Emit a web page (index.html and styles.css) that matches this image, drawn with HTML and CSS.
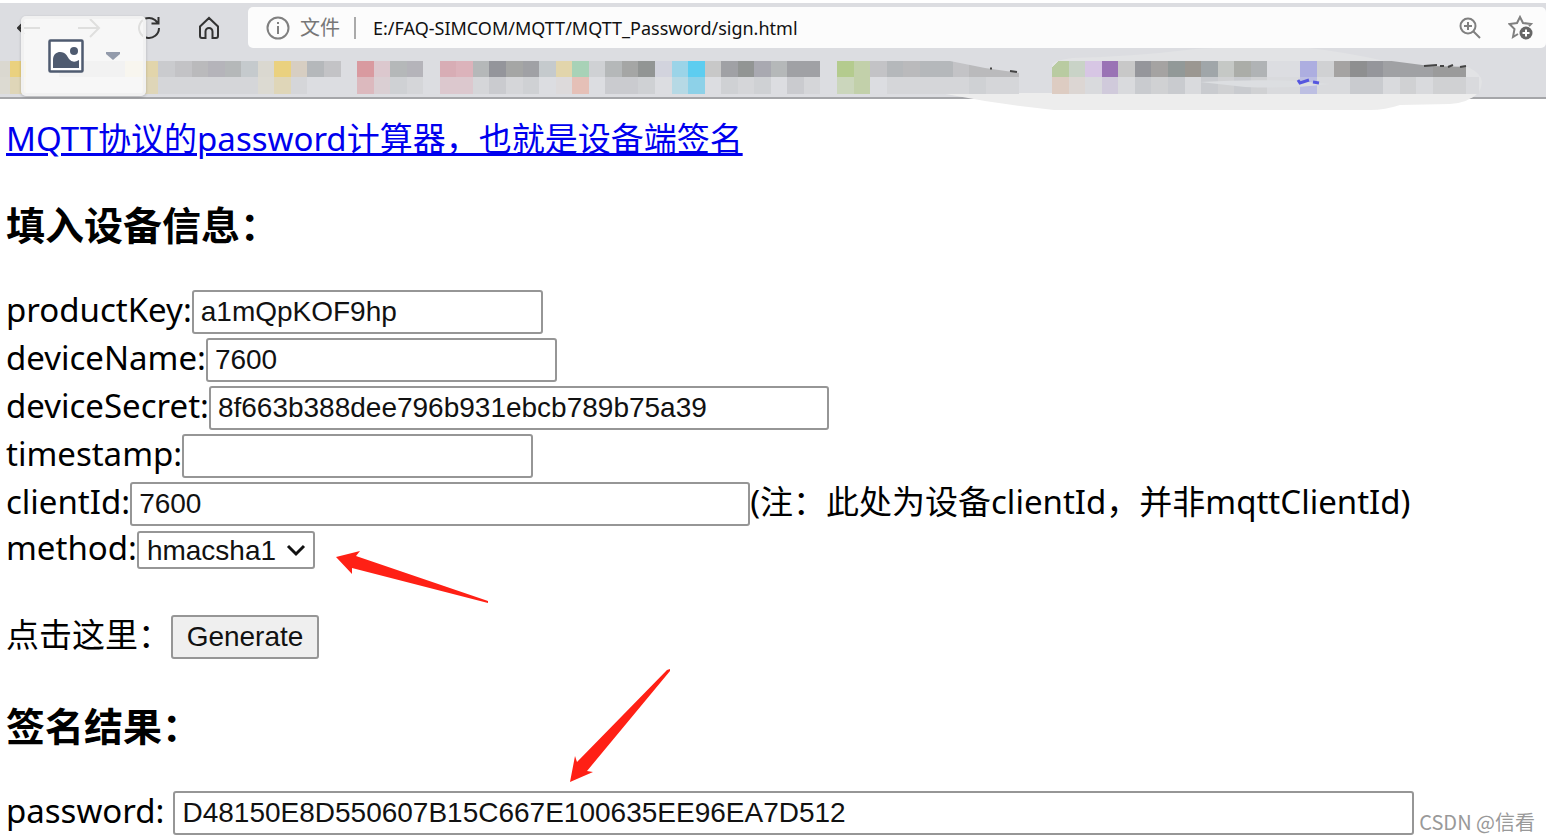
FILE: index.html
```
<!DOCTYPE html>
<html lang="zh-CN">
<head>
    <meta charset="UTF-8">
    <meta name="viewport" content="width=device-width, initial-scale=1.0">
    <title>MQTT_Password</title>
    <link rel="stylesheet" href="styles.css">
</head>
<body>
    <header class="browser">
        <div class="toolbar">
            <nav class="nav-btns">
                <button class="nav-btn" aria-label="后退">
                    <svg width="24" height="24" viewBox="0 0 24 24"><path d="M23 12H1M7 6l-6 6 6 6"/></svg>
                </button>
                <button class="nav-btn" aria-label="前进">
                    <svg width="24" height="24" viewBox="0 0 24 24"><path d="M1 12h21M13 3l9 9-9 9"/></svg>
                </button>
                <button class="nav-btn" aria-label="刷新">
                    <svg width="24" height="24" viewBox="0 0 24 24"><path d="M22 12A10 10 0 1 1 18 4l3 3M21.500 1v6.500h-7"/></svg>
                </button>
                <button class="nav-btn" aria-label="主页">
                    <svg width="24" height="24" viewBox="0 0 24 24"><path d="M3 10.500L12 2l9 8.500V20q0 2-2 2h-3.500v-6.500a3.500 3.500 0 0 0-7 0V22H5q-2 0-2-2z"/></svg>
                </button>
            </nav>
            <div class="address">
                <svg class="gray-icon" width="24" height="24" viewBox="0 0 24 24"><circle cx="12" cy="12" r="10.500"/><path d="M12 10v8M12 6v2"/></svg>
                <label class="scheme" for="url">文件</label>
                <input class="url" id="url" type="text" value="E:/FAQ-SIMCOM/MQTT/MQTT_Password/sign.html">
                <button class="address-btn" aria-label="缩放">
                    <svg class="gray-icon" width="24" height="24" viewBox="0 0 24 24"><circle cx="10" cy="10" r="7.500"/><path d="M15.500 15.500L22 22M10 6v8M6 10h8"/></svg>
                </button>
                <button class="address-btn" aria-label="收藏">
                    <svg class="gray-icon" width="26" height="26" viewBox="0 0 26 26"><path d="M10 19l-5 3 1.500-8L1.500 9l7.500-1L12 2l3 6 8 1-2 2"/><circle class="solid" cx="18" cy="18" r="6.500"/><path class="plus" d="M18 14.500v7M14.500 18h7"/></svg>
                </button>
            </div>
        </div>
        <div class="bookmarks">
            <svg class="mosaic" width="1546" height="66" viewBox="0 48 1546 66">
                <path fill="#e2e3e5" d="M1052 64Q1056 60 1072 58Q1130 57 1195 49Q1240 46 1300 47Q1340 51 1385 61L1468 67Q1482 74 1482 82Q1481 94 1471 98L1052 96z"/>
                <path fill="#ededed" d="M940 93H1478Q1468 103 1450 104L1400 105Q1385 110 1370 110H1054L1020 106 985 101z"/>
                <g transform="translate(9.5 61) scale(16.55 16.3)" shape-rendering="crispEdges">
                    <path fill="#dad8d0" d="M-1 0h1v1h-1zM15 0h1v1h-1z"/>
                    <path fill="#ead17f" d="M0 0h1v1h-1zM16 0h1v1h-1z"/>
                    <path fill="#dfd6b8" d="M0 1h1v1h-1zM8 1h1v1h-1zM16 1h1v1h-1z"/>
                    <path fill="#b5b8bb" d="M3 0h4v1h-4zM18 0h1v1h-1zM53 0h1v1h-1zM55 0h2v1h-2z"/>
                    <path fill="#e2d5ab" d="M7 0h2v1h-2zM33 0h1v1h-1z"/>
                    <path fill="#cacbce" d="M9 0h1v1h-1z"/>
                    <path fill="#c3c3c6" d="M10 0h1v1h-1zM19 0h1v1h-1zM52 0h1v1h-1zM57 0h1v1h-1z"/>
                    <path fill="#bababc" d="M11 0h1v1h-1zM54 0h1v1h-1zM58 0h3v1h-3z"/>
                    <path fill="#b5b4ba" d="M12 0h1v1h-1zM24 0h1v1h-1z"/>
                    <path fill="#b5b8b9" d="M13 0h1v1h-1zM23 0h1v1h-1zM28 0h1v1h-1zM36 0h1v1h-1zM46 0h1v1h-1z"/>
                    <path fill="#c5cacd" d="M14 0h1v1h-1zM32 0h1v1h-1z"/>
                    <path fill="#d7cec2" d="M17 0h1v1h-1z"/>
                    <path fill="#d5d6d9" d="M9 1h6v1h-6zM17 1h1v1h-1zM24 1h1v1h-1zM28 1h1v1h-1zM30 1h1v1h-1zM44 1h1v1h-1zM48 1h1v1h-1zM53 1h5v1h-5zM59 1h2v1h-2z"/>
                    <path fill="#dcdad2" d="M-1 1h1v1h-1zM15 1h1v1h-1z"/>
                    <path fill="#d99aa0" d="M21 0h1v1h-1z"/>
                    <path fill="#dcb9be" d="M21 1h1v1h-1z"/>
                    <path fill="#dcc8ce" d="M22 0h1v1h-1zM26 1h2v1h-2z"/>
                    <path fill="#dacfd3" d="M22 1h1v1h-1z"/>
                    <path fill="#cfd1d4" d="M23 1h1v1h-1zM31 1h1v1h-1zM35 0h1v1h-1zM38 1h1v1h-1zM43 1h1v1h-1zM45 1h1v1h-1zM58 1h1v1h-1z"/>
                    <path fill="#d8adb5" d="M26 0h1v1h-1z"/>
                    <path fill="#dcb3bb" d="M27 0h1v1h-1z"/>
                    <path fill="#94959b" d="M29 0h1v1h-1z"/>
                    <path fill="#cacbcf" d="M29 1h1v1h-1zM36 1h2v1h-2zM47 1h1v1h-1z"/>
                    <path fill="#a5a6a5" d="M30 0h1v1h-1zM37 0h1v1h-1z"/>
                    <path fill="#a0a1a5" d="M31 0h1v1h-1zM43 0h1v1h-1zM47 0h2v1h-2z"/>
                    <path fill="#dddadb" d="M33 1h1v1h-1z"/>
                    <path fill="#a8d2b7" d="M34 0h1v1h-1z"/>
                    <path fill="#e5c0b7" d="M34 1h1v1h-1z"/>
                    <path fill="#929594" d="M38 0h1v1h-1zM44 0h1v1h-1z"/>
                    <path fill="#d2d3dd" d="M39 0h1v1h-1z"/>
                    <path fill="#9bd4e8" d="M40 0h1v1h-1z"/>
                    <path fill="#b6d9e5" d="M40 1h1v1h-1z"/>
                    <path fill="#5dcdf0" d="M41 0h1v1h-1z"/>
                    <path fill="#8dd1e8" d="M41 1h1v1h-1z"/>
                    <path fill="#c8c8c8" d="M42 0h1v1h-1zM67 0h1v1h-1z"/>
                    <path fill="#a9a9b1" d="M45 0h1v1h-1z"/>
                    <path fill="#b4cb8e" d="M50 0h1v1h-1z"/>
                    <path fill="#cbd6bc" d="M50 1h1v1h-1z"/>
                    <path fill="#c2d0aa" d="M51 0h1v2h-1z"/>
                    <path fill="#b9cba1" d="M63.400 0h.6v1h-1v-.6z"/>
                    <path fill="#ddccc2" d="M63 1h1v1h-1z"/>
                    <path fill="#c9d3c7" d="M64 0h1v1h-1z"/>
                    <path fill="#dcd6d3" d="M64 1h1v1h-1z"/>
                    <path fill="#d7c6e4" d="M65 0h1v1h-1z"/>
                    <path fill="#9a73b5" d="M66 0h1v1h-1z"/>
                    <path fill="#d0cadb" d="M66 1h1v1h-1z"/>
                    <path fill="#d9dadd" d="M65 1h1v1h-1zM67 1h1v1h-1zM71 1h1v1h-1zM76 1h2v1h-2zM79 1h2v1h-2zM83 1h1v1h-1zM85 1h1v1h-1zM88 1h.8v1h-.8z"/>
                    <path fill="#95969b" d="M68 0h1v1h-1zM82 0h1v1h-1z"/>
                    <path fill="#c9cbcf" d="M68 1h1v1h-1zM70 1h1v1h-1zM72 1h1v1h-1zM74 1h1v1h-1zM81 1h2v1h-2z"/>
                    <path fill="#a5a3a2" d="M69 0h1v1h-1zM80 0h1v1h-1z"/>
                    <path fill="#d0d1d3" d="M69 1h1v1h-1zM73 1h1v1h-1zM75 1h1v1h-1zM79 0h1v1h-1zM84 1h1v1h-1zM86 1h2v1h-2z"/>
                    <path fill="#929998" d="M70 0h1v1h-1z"/>
                    <path fill="#9b9791" d="M71 0h1v1h-1z"/>
                    <path fill="#a0a6a9" d="M72 0h1v1h-1z"/>
                    <path fill="#c5c8c5" d="M73 0h1v1h-1z"/>
                    <path fill="#abada8" d="M74 0h1v1h-1z"/>
                    <path fill="#b0b3b5" d="M75 0h1v1h-1z"/>
                    <path fill="#dcdde1" d="M76 0h2v1h-2z"/>
                    <path fill="#adaee0" d="M78 0h1v1h-1z"/>
                    <path fill="#bdbfe2" d="M78 1h1v1h-1z"/>
                    <path fill="#8e8f90" d="M81 0h1v1h-1z"/>
                    <path fill="#a0a1a4" d="M83 0h3v1h-3z"/>
                    <path fill="#9b9b9b" d="M86 0h2v1h-2z"/>
                </g>
                <path fill="#dcdde1" d="M936 60L950 61 985 68 1020 73V60zM1384 60L1430 66 1470 67V60z"/>
                <path fill="#dcdee1" d="M1200 82Q1250 79 1296 81L1330 84Q1290 89 1245 87z"/>
                <path fill="none" stroke="#5556df" stroke-width="3" d="M1298 80l2 3 9-3M1313 82l6 1"/>
                <path fill="none" stroke="#444" stroke-width="2" d="M990 68.500h2M1010 71l7 1M1424 66l13-1M1440 66h4M1448 67l5-2M1460 67l6-1"/>
            </svg>
        </div>
        <div class="image-tool">
            <button class="image-btn" aria-label="图片">
                <svg width="36" height="34" viewBox="0 0 36 34"><rect x="1.500" y="1.500" width="33" height="31" rx="1" fill="#fff" stroke="#4f5b70" stroke-width="2.500"/><path fill="#4f5b70" d="M5 29V21C5 15 9 13 12 13C18 13 19 17 21 20Q25 25 31 21V29z"/><circle cx="26" cy="12" r="4" fill="#4f5b70"/></svg>
                <svg width="14" height="8" viewBox="0 0 14 8"><path fill="#939bab" d="M0 0h14v2L7 8 0 2z"/></svg>
            </button>
        </div>
    </header>

    <main class="page">
        <a class="title-link" href="#">MQTT协议的password计算器，也就是设备端签名</a>
        <h3>填入设备信息：</h3>
        <div class="row">
            <label for="productKey">productKey:</label><input type="text" id="productKey" class="field" value="a1mQpKOF9hp">
        </div>
        <div class="row">
            <label for="deviceName">deviceName:</label><input type="text" id="deviceName" class="field" value="7600">
        </div>
        <div class="row">
            <label for="deviceSecret">deviceSecret:</label><input type="text" id="deviceSecret" class="field field-wide" value="8f663b388dee796b931ebcb789b75a39">
        </div>
        <div class="row">
            <label for="timestamp">timestamp:</label><input type="text" id="timestamp" class="field">
        </div>
        <div class="row">
            <label for="clientId">clientId:</label><input type="text" id="clientId" class="field field-wide" value="7600"><span class="note">(注：此处为设备clientId，并非mqttClientId)</span>
        </div>
        <div class="row row-method">
            <label for="method">method:</label>
            <div class="select-wrap">
                <select id="method">
                    <option>hmacsha1</option>
                    <option>hmacmd5</option>
                </select>
                <svg class="chevron" width="20" height="14" viewBox="0 0 20 14"><path d="M2 2l8 8 8-8"/></svg>
                <svg class="arrow arrow-method" width="154" height="54" viewBox="0 0 154 54"><path d="M0 6L24 0 20 5 152 50V52L16 17 16 23z"/></svg>
            </div>
        </div>
        <div class="row row-generate">
            <label for="generate">点击这里：</label><button id="generate" class="generate-btn">Generate</button>
        </div>
        <h3>签名结果：</h3>
        <div class="row row-password">
            <label for="password">password:</label><input type="text" id="password" class="field field-result" value="D48150E8D550607B15C667E100635EE96EA7D512">
            <svg class="arrow arrow-password" width="102" height="114" viewBox="0 0 102 114"><path d="M0 113L5 87 7 93 97 1 100 0V2L17 102 23 103z"/></svg>
        </div>
    </main>
    <div class="watermark">CSDN @信看</div>
</body>
</html>
```
FILE: styles.css
```
* {
    box-sizing: border-box;
}

body {
    margin: 0;
    background: #fff;
    color: #000;
    font-family: "Noto Sans", "Noto Sans CJK SC", sans-serif;
    font-size: 33px;
    line-height: 48px;
}

button, input, select {
    margin: 0;
    font-family: "Liberation Sans", Arial, sans-serif;
    color: #111;
}

svg {
    display: block;
    flex: none;
}

/* browser bar */
.browser {
    position: relative;
    margin: 3px 4px 0 0;
    background: #dcdde1;
    border-bottom: 2px solid #a5a6a9;
}

.toolbar {
    display: flex;
    height: 49px;
    padding: 4px 0;
}

.nav-btns {
    display: flex;
    align-items: center;
    gap: 36px;
    width: 248px;
    padding-left: 17px;
}

.nav-btn, .address-btn {
    padding: 0;
    border: none;
    background: none;
}

.nav-btn svg {
    fill: none;
    stroke: #333;
    stroke-width: 2;
}

.address {
    flex: 1;
    display: flex;
    align-items: center;
    padding: 0 12px 0 18px;
    background: #fcfcfc;
    border-radius: 5px;
}

.gray-icon {
    fill: none;
    stroke: #808080;
    stroke-width: 2;
}

.gray-icon .solid {
    fill: #666;
    stroke: none;
}

.gray-icon .plus {
    stroke: #fff;
}

.scheme {
    margin-left: 10px;
    padding-right: 14px;
    border-right: 2px solid #aaa;
    color: #777;
    font-size: 20px;
    line-height: 22px;
}

.url {
    flex: 1;
    padding: 0 0 0 17px;
    border: none;
    outline: none;
    background: none;
    font-family: "Noto Sans", sans-serif;
    font-size: 18px;
}

.address-btn {
    margin-left: 26px;
}

.bookmarks {
    height: 45px;
}

.mosaic {
    position: absolute;
    top: 45px;
    left: 0;
    z-index: 1;
}

.image-tool {
    position: absolute;
    top: 13px;
    left: 21px;
    z-index: 2;
    width: 125px;
    height: 80px;
    border: 3px solid #f1f1f1;
    border-radius: 5px;
    background: rgba(252, 252, 250, 0.86);
    box-shadow: 0 1px 3px rgba(0, 0, 0, 0.2);
}

.image-btn {
    display: flex;
    align-items: center;
    gap: 22px;
    width: 100%;
    height: 100%;
    padding: 0 0 0 24px;
    border: none;
    background: none;
}

/* page */
.page {
    padding: 16px 6px 0;
}

.title-link {
    display: block;
    width: fit-content;
    color: #00e;
    text-decoration: underline;
}

h3 {
    margin: 36px 0 37px;
    font-size: 39px;
    line-height: 52px;
}

.row {
    display: flex;
    align-items: center;
    height: 48px;
}

.row label, .note {
    padding-bottom: 4px;
}

.field {
    width: 351px;
    height: 44px;
    padding: 0 7px;
    border: 2px solid #969696;
    border-radius: 3px;
    font-size: 28px;
}

.field-wide {
    width: 620px;
}

.field-result {
    width: 1241px;
}

.row-method {
    height: 44px;
}

.select-wrap {
    position: relative;
}

select {
    display: block;
    width: 178px;
    height: 38px;
    padding: 0 8px;
    appearance: none;
    border: 2px solid #969696;
    border-radius: 3px;
    background: #fff;
    font-size: 28px;
}

.chevron {
    position: absolute;
    right: 9px;
    top: 13px;
    fill: none;
    stroke: #111;
    stroke-width: 3;
    pointer-events: none;
}

.row-generate {
    margin: 41px 0 39px;
}

.generate-btn {
    width: 148px;
    height: 44px;
    padding: 0;
    border: 2px solid #969696;
    border-radius: 3px;
    background: #efefef;
    font-size: 28px;
}

.row-password {
    position: relative;
    gap: 9px;
}

.arrow {
    position: absolute;
    fill: #ff2015;
    pointer-events: none;
}

.arrow-method {
    left: 199px;
    top: 20px;
}

.arrow-password {
    left: 564px;
    bottom: 54px;
}

.watermark {
    position: absolute;
    right: 15px;
    bottom: 4px;
    color: #999;
    font-family: "Noto Sans CJK SC", sans-serif;
    font-size: 20px;
    line-height: 28px;
}
```
